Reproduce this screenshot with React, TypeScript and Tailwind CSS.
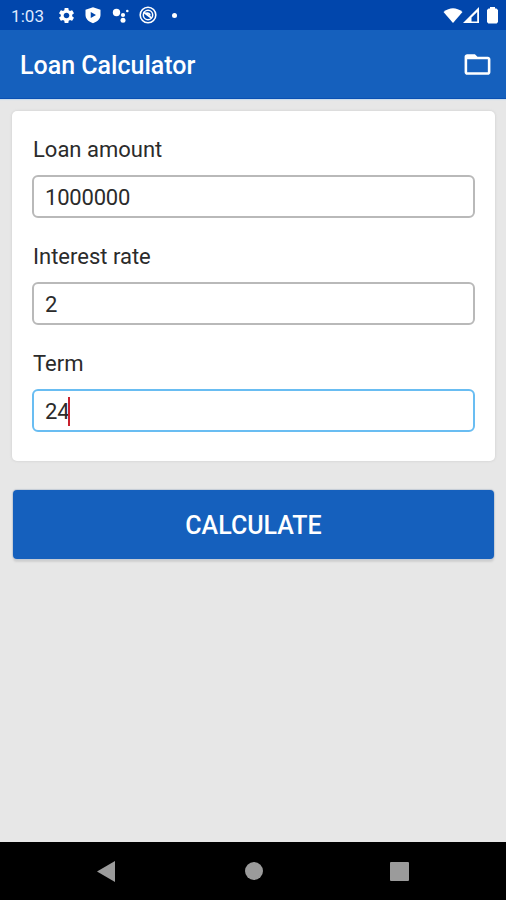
import { MdSettings } from "react-icons/md";

type FieldProps = { label: string; value: string; focused?: boolean };

function Field({ label, value, focused = false }: FieldProps) {
  return (
    <div className="h-[107px]">
      <div className="h-[39px] pt-px pl-px text-[22px] leading-[26px] text-[#2b2b2b]">{label}</div>
      <div
        className={`flex h-[43px] w-[443px] items-center rounded-[6px] border-2 bg-white pt-px pl-[11px] text-[22px] tracking-[-0.2px] text-[#2b2b2b] ${
          focused ? "border-[#69bdf2]" : "border-[#b9b9b9]"
        }`}
      >
        <span>{value}</span>
        {focused && <span className="-ml-px h-[29px] w-[2px] bg-[#c8202d]" />}
      </div>
    </div>
  );
}

function StatusBar() {
  return (
    <div className="flex h-[30px] shrink-0 items-center bg-[#0146ac] pl-[11px] text-white">
      <span className="w-[46px] pt-px text-[17px] leading-[30px] tracking-[0.1px] text-[#dfe9ff]">1:03</span>
      <MdSettings className="size-[19px]" />
      <svg className="ml-[8px] size-[18px]" viewBox="0 0 24 24" fill="currentColor">
        <path fillRule="evenodd" d="M12 1.500 22 5v7c0 5-4 9-10 11C6 21 2 17 2 12V5zM9 8v8l7-4z" />
      </svg>
      <svg className="ml-[10px] h-[18px] w-[18px]" viewBox="0 0 18 18" fill="currentColor">
        <circle cx="4.500" cy="6.500" r="3.700" />
        <circle cx="11" cy="9" r="2.100" />
        <circle cx="15.300" cy="5" r="1.300" />
        <circle cx="11" cy="14.200" r="2.500" />
      </svg>
      <svg className="ml-[9px] h-[18px] w-[18px]" viewBox="0 0 18 18" fill="none" stroke="currentColor">
        <circle cx="9" cy="9" r="7.800" strokeWidth="1.600" />
        <circle cx="9" cy="9" r="4.700" strokeWidth="1.500" />
        <path d="m4.500 6 8 6M7 7.300q3.500-.8 4 2.200" strokeWidth="1.700" />
      </svg>
      <span className="ml-[15px] size-[5px] rounded-full bg-white" />
      <svg className="ml-auto h-[17px] w-[20px]" viewBox="0 0 20 17" fill="currentColor">
        <path d="M.5 5Q10-2.500 19.500 5L10 16z" />
      </svg>
      <svg className="h-[18px] w-[17px]" viewBox="0 0 17 18">
        <path fill="currentColor" fillRule="evenodd" d="M0 17 16 1v16zm8.500-1.500h5.700V6L8.500 11.500z" />
      </svg>
      <svg className="mr-[8px] ml-[7px] h-[18px] w-[11px]" viewBox="0 0 11 18" fill="currentColor">
        <path d="M3 1h5v1.500h1.500L11 4v12l-1.300 1.500H1.300L0 16V4l1.500-1.500H3z" />
      </svg>
    </div>
  );
}

export default function App() {
  return (
    <div className="flex h-[900px] w-[506px] flex-col overflow-hidden bg-[#e7e7e7] font-['Roboto',sans-serif]">
      <StatusBar />
      <header className="flex h-[69px] shrink-0 items-center justify-between border-b border-[#0a50b2] bg-[#1560bd] pr-[13.500px] pl-[20px] shadow-[0_1px_1px_#c9dcec]">
        <h1 className="pt-[3px] text-[25px] leading-[30px] font-medium text-white">Loan Calculator</h1>
        <svg className="size-[31px]" viewBox="0 0 24 24" fill="white">
          <path d="M20 6h-8l-2-2H4c-1.100 0-2 .9-2 2v12c0 1.100.9 2 2 2h16c1.100 0 2-.9 2-2V8c0-1.100-.9-2-2-2zm0 12H4V8h16v10z" />
        </svg>
      </header>
      <main className="flex-1 pt-[12px]">
        <section className="ml-[12px] h-[350px] w-[483px] rounded-[5px] bg-white pt-[25px] pl-[20px] shadow-[0_0_2px_1px_#dadada]">
          <Field label="Loan amount" value="1000000" />
          <Field label="Interest rate" value="2" />
          <Field label="Term" value="24" focused />
        </section>
        <button className="mt-[29px] ml-[13px] block h-[69px] w-[481px] rounded-[4px] bg-[#1560bd] pt-[2px] text-[25px] font-medium text-white shadow-[0_0_1px_1px_#c4cbd5,0_3px_2px_#d0d0d0]">
          CALCULATE
        </button>
      </main>
      <nav className="flex h-[58px] shrink-0 items-center bg-black text-[#9b9b9b]">
        <svg className="ml-[97px] h-[21px] w-[18px]" viewBox="0 0 18 21" fill="currentColor">
          <path d="M0 10.500 18 0v21z" />
        </svg>
        <span className="ml-[130px] size-[18px] rounded-full bg-[#9b9b9b]" />
        <span className="ml-[127px] size-[19px] rounded-[1px] bg-[#9b9b9b]" />
      </nav>
    </div>
  );
}
